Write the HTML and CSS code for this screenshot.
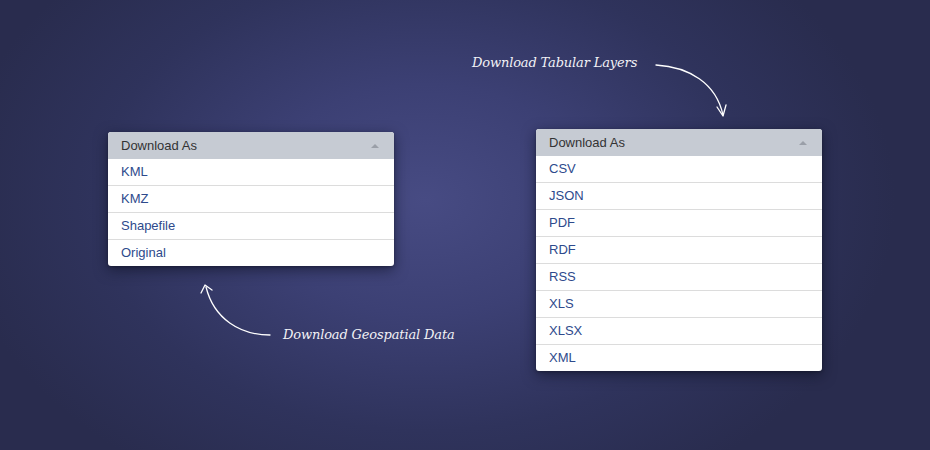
FILE: index.html
```html
<!DOCTYPE html>
<html>
<head>
<meta charset="utf-8">
<link rel="stylesheet" href="styles.css">
</head>
<body>
<div class="stage">
  <div class="menu menu-left">
    <div class="menu-head"><span>Download As</span><span class="caret"></span></div>
    <ul class="menu-list">
      <li>KML</li>
      <li>KMZ</li>
      <li>Shapefile</li>
      <li>Original</li>
    </ul>
  </div>
  <div class="menu menu-right">
    <div class="menu-head"><span>Download As</span><span class="caret"></span></div>
    <ul class="menu-list">
      <li>CSV</li>
      <li>JSON</li>
      <li>PDF</li>
      <li>RDF</li>
      <li>RSS</li>
      <li>XLS</li>
      <li>XLSX</li>
      <li>XML</li>
    </ul>
  </div>

  <div class="note note-top">Download Tabular Layers</div>
  <svg class="arrow arrow-top" width="90" height="70" viewBox="0 0 90 70">
    <path d="M2 4 C 35 6, 62 22, 69 54" fill="none" stroke="#fff" stroke-width="1.3" stroke-linecap="round"/>
    <path d="M63 46 L69 55 L72 44" fill="none" stroke="#fff" stroke-width="1.3" stroke-linecap="round" stroke-linejoin="round"/>
  </svg>

  <div class="note note-bottom">Download Geospatial Data</div>
  <svg class="arrow arrow-bottom" width="80" height="70" viewBox="0 0 80 70">
    <path d="M70 56 C 40 56, 14 40, 6 8" fill="none" stroke="#fff" stroke-width="1.3" stroke-linecap="round"/>
    <path d="M1 14 L5 6 L12 11" fill="none" stroke="#fff" stroke-width="1.3" stroke-linecap="round" stroke-linejoin="round"/>
  </svg>
</div>
</body>
</html>
```
FILE: styles.css
```css
html, body {
  margin: 0;
  padding: 0;
}
body {
  width: 930px;
  height: 450px;
  overflow: hidden;
  background: #2a2e52;
}
.stage {
  position: relative;
  width: 930px;
  height: 450px;
  box-sizing: border-box;
  padding-left: 108px;
  display: flex;
  align-items: flex-start;
  gap: 142px;
  background: radial-gradient(ellipse 470px 330px at 425px 200px, #474b83 0%, #3c4074 35%, #2f335c 70%, #292c4e 100%);
  font-family: "Liberation Sans", Arial, sans-serif;
}
.menu {
  width: 286px;
  background: #fff;
  border-radius: 3px;
  overflow: hidden;
  box-shadow: 0 4px 14px rgba(10, 12, 30, 0.55), 0 1px 3px rgba(0, 0, 0, 0.3);
}
.menu-left { margin-top: 132px; }
.menu-right { margin-top: 129px; }
.menu-head {
  height: 27px;
  background: #c6cbd3;
  display: flex;
  align-items: center;
  justify-content: space-between;
  padding: 0 15px 0 13px;
  font-size: 13px;
  color: #333;
}
.caret {
  width: 0;
  height: 0;
  border-left: 4px solid transparent;
  border-right: 4px solid transparent;
  border-bottom: 4px solid #9a9fa8;
}
.menu-list {
  list-style: none;
  margin: 0;
  padding: 0;
}
.menu-list li {
  height: 26px;
  line-height: 26px;
  padding-left: 13px;
  font-size: 13px;
  color: #2e4a8c;
  border-top: 1px solid #dcdcdc;
}
.menu-list li:first-child {
  border-top: none;
}
.note {
  position: absolute;
  font-family: "DejaVu Serif", Georgia, serif;
  font-style: italic;
  font-size: 13px;
  letter-spacing: -0.15px;
  color: #f2f2f6;
  white-space: nowrap;
}
.note-top { left: 472px; top: 55px; }
.note-bottom { left: 283px; top: 327px; }
.arrow {
  position: absolute;
  overflow: visible;
}
.arrow-top { left: 654px; top: 61px; }
.arrow-bottom { left: 200px; top: 279px; }
```
